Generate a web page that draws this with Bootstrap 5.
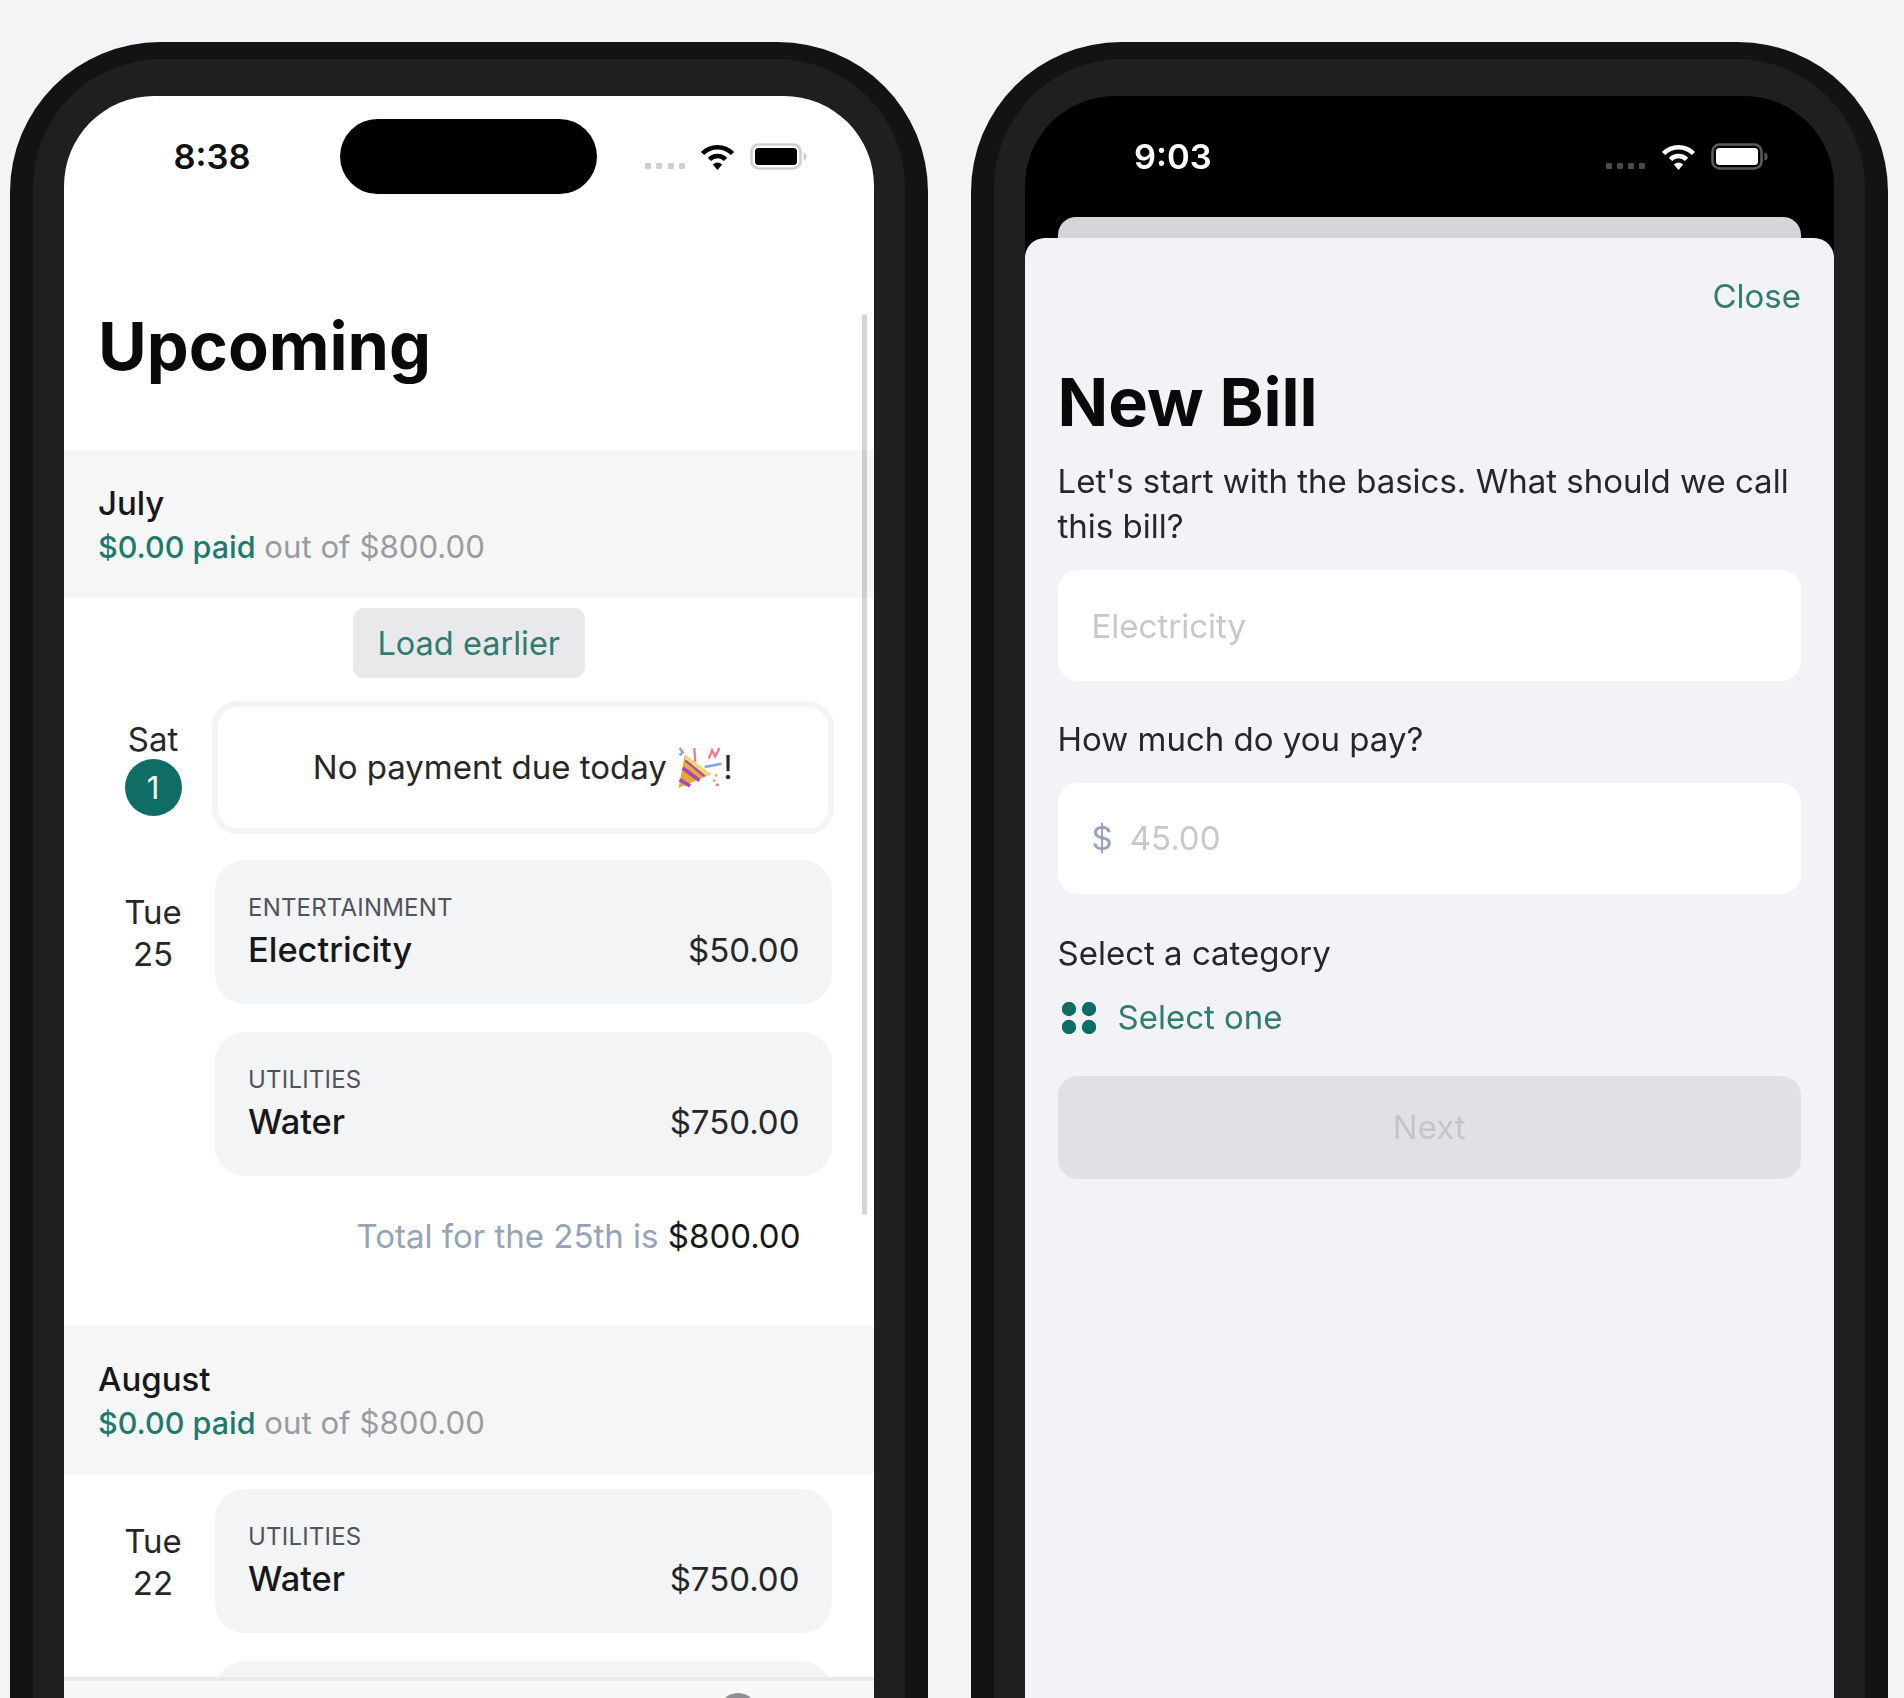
<!DOCTYPE html>
<html lang="en">
<head>
<meta charset="utf-8">
<title>Upcoming / New Bill</title>
<link href="https://cdn.jsdelivr.net/npm/bootstrap@5.3.0/dist/css/bootstrap.min.css" rel="stylesheet">
<style>
html,body{height:100%;overflow:hidden}
body{background:#f3f4f6;font-family:Inter,"Liberation Sans",sans-serif;color:#18181b}
.stage{height:1698px;overflow:hidden;padding:42px 0 0 10px;gap:43px;filter:blur(.7px)}
.ph-outer{width:917.5px;height:1900px;flex:none;background:#131313;border-radius:150px;padding:17px 23px}
.ph-bezel{height:100%;background:#1f1f1f;border-radius:128px;padding:37px 31px}
.ph-screen{height:100%;border-radius:90px;overflow:hidden;background:#fff;position:relative}
.ph-dark{background:#000}
.stat{height:75px;margin-top:23px}
.stat-time{font-weight:600;font-size:34.5px;line-height:1;width:166.5px;margin-left:109.5px;padding-top:1px;color:#111}
.ph-dark .stat-time{color:#fff}
.isl{width:257px;height:75px;background:#000;border-radius:38px}
.sig{width:40px;margin:18px 15px 0 48px}
.sig i{display:block;width:6px;height:6px;background:#cfcfcf;border-radius:1px}
.ph-dark .sig i{background:#4a4a4a}
.batt{margin-left:15px}
.feedbox{height:1227px;overflow:hidden}
.ttl{font-size:66.6px;line-height:80px;font-weight:700;color:#0a0a0a;margin:0}
.upc{height:256px;padding:112px 0 0 34px}
.mon{background:#f6f6f7;height:148px;padding:31px 0 0 34px;line-height:44px}
.mon-name{font-weight:500;color:#18181b;font-size:33px}
.mon-sum{color:#9b9b9f;font-size:31.2px}
.mon-sum b{color:#1e7a6c;font-weight:500;font-size:30.5px}
.more{width:232px;height:70px;margin-top:10px;background:#e9e9eb;border:0;border-radius:11px;color:#2e7d70;font-size:32.5px;padding:2px 0 0}
.dayrow{margin-right:42px}
.dcol{width:124px;margin-left:27px;flex:none;text-align:center;font-size:33px;line-height:42px;color:#27272a}
.dcol-a{padding-top:17px}
.dcol-b{padding-top:31px}
.cards{flex:1;min-width:0;gap:28px}
.pill{width:57px;height:57px;border-radius:50%;background:#0f6e63;color:#fff;margin:-1px auto 0;font-size:31px}
.empt{height:133px;margin:0 -2px 0 -3px;border:6px solid #f3f4f6;border-radius:26px;background:#fff;font-size:33px;color:#27272a}
.bill{height:144px;background:#f3f4f6;border-radius:30px;padding:33px 32px 0 33px}
.bill-cat{font-size:24px;line-height:30px;letter-spacing:.2px;color:#52525b}
.bill-row{margin-top:5px;line-height:44px}
.bill-name{font-weight:500;color:#18181b;font-size:34.4px}
.bill-amt{color:#27272a;font-size:33px}
.tot{font-size:33px;line-height:44px;text-align:right;padding-right:73px;margin:38px 0 68px;color:#94a3b8}
.tot span{color:#18181b}
.tabb{height:60px;background:#f8f8f8;border-top:4px solid #e9e9ea;padding:12px 0 0 654px}
.tab-ico{width:40px;height:40px;border-radius:50%;background:#8e8e93}
.sbar{position:absolute;right:7px;top:218px;width:5px;height:901px;background:rgba(0,0,0,.16);border-radius:3px}
.sh-back{height:21px;margin:23px 33px 0;background:#d5d5da;border-radius:18px 18px 0 0}
.sh{background:#f2f2f7;height:1500px;border-radius:20px 20px 0 0;padding:36px 33px 0}
.sh-close{display:block;text-align:right;color:#2e7d70;font-size:33px;line-height:44px;text-decoration:none}
.sh .ttl{margin-top:44px}
.lbl{font-size:33px;line-height:45px;color:#27272a;margin:17px 0 0}
.fld{height:111px;border:0;border-radius:20px;background:#fff;padding:0 34px;font-size:33px;box-shadow:none}
.fld::placeholder{color:#c7c7cc}
.fld-a{margin-top:21px}
.fld-b{margin-top:22px;height:111px;background:#fff;border-radius:20px;padding:1px 34px 0;font-size:33px}
.fld-b .cur{color:#94a3b8;margin-right:17px}
.fld-b .fld{padding:0;height:auto;background:transparent}
.lab2{font-size:33px;line-height:44px;color:#27272a}
.lab-a{margin-top:36px}
.lab-b{margin-top:37px}
.pick{margin-top:21px;height:44px;padding-left:4px;gap:22px;color:#2e7d70;font-size:33px}
.nxt,.nxt:disabled{margin-top:36px;height:103px;width:100%;background:#e0e0e5;border:0;border-radius:20px;color:#c4c4c9;font-size:33px;opacity:1}
.gap26{margin-top:26px}
.gap23{margin-top:23px}
.gap15{margin-top:15px}
</style>
</head>
<body>
<main class="stage d-flex align-items-start">

  <section class="ph-outer">
    <div class="ph-bezel">
      <div class="ph-screen">
        <div class="stat d-flex align-items-center">
          <div class="stat-time">8:38</div>
          <div class="isl"></div>
          <div class="sig d-flex justify-content-between"><i></i><i></i><i></i><i></i></div>
          <svg width="35" height="26" viewBox="0 0 35 26"><path d="M2.5 9.5A21 21 0 0 1 32.5 9.5M9.5 15.5A11 11 0 0 1 25.5 15.5" fill="none" stroke="#000" stroke-width="4.6"/><path d="M12.8 20.6Q17.5 16.6 22.2 20.6L17.5 26Z" fill="#000"/></svg>
          <svg class="batt" width="57" height="27" viewBox="0 0 57 27"><rect x="1.5" y="1.5" width="49" height="24" rx="7" fill="#fff" stroke="#cfcfcf" stroke-width="2.6"/><rect x="5" y="5" width="42" height="17" rx="3.5" fill="#000"/><path d="M53.5 9.5c2 .6 3 2 3 4s-1 3.4-3 4z" fill="#cfcfcf"/></svg>
        </div>
        <div class="upc"><h1 class="ttl">Upcoming</h1></div>
        <div class="feedbox">
          <div class="mon"><div class="mon-name">July</div><div class="mon-sum"><b>$0.00 paid</b> out of $800.00</div></div>
          <div class="text-center"><button class="btn more" type="button">Load earlier</button></div>

          <div class="dayrow d-flex gap23">
            <div class="dcol dcol-a"><div>Sat</div><div class="pill d-flex align-items-center justify-content-center">1</div></div>
            <div class="cards d-flex flex-column"><div class="empt d-flex align-items-center justify-content-center">No payment due today&nbsp;<svg width="47" height="44" viewBox="0 0 44 42"><path d="M2 40 8 8 33 27Z" fill="#e6ad2c"/><path d="M8 8 33 27 26 29 9 17Z" fill="#f7d866"/><path d="M6 21 22 33M3 32 13 38" stroke="#a845c9" stroke-width="3.6" fill="none"/><path d="M8.5 14 27 29" stroke="#a845c9" stroke-width="2.4" fill="none"/><path d="M3 2 6 6 3 9M27 20 43 17" stroke="#7aa5f5" stroke-width="2.4" fill="none"/><path d="M17 2l1 13M31 12l3-8 3 6 4-8" stroke="#f0788f" stroke-width="2.2" fill="none"/><circle cx="38" cy="28" r="1.5" fill="#eeb27a"/><circle cx="36" cy="33" r="1.5" fill="#eeb27a"/><circle cx="39" cy="37" r="1.5" fill="#f0788f"/></svg>!</div></div>
          </div>

          <div class="dayrow d-flex gap26">
            <div class="dcol dcol-b"><div>Tue</div><div>25</div></div>
            <div class="cards d-flex flex-column">
              <div class="bill"><div class="bill-cat">ENTERTAINMENT</div><div class="bill-row d-flex justify-content-between align-items-baseline"><span class="bill-name">Electricity</span><span class="bill-amt">$50.00</span></div></div>
              <div class="bill"><div class="bill-cat">UTILITIES</div><div class="bill-row d-flex justify-content-between align-items-baseline"><span class="bill-name">Water</span><span class="bill-amt">$750.00</span></div></div>
            </div>
          </div>
          <div class="tot">Total for the 25th is <span>$800.00</span></div>

          <div class="mon"><div class="mon-name">August</div><div class="mon-sum"><b>$0.00 paid</b> out of $800.00</div></div>
          <div class="dayrow d-flex gap15">
            <div class="dcol dcol-b"><div>Tue</div><div>22</div></div>
            <div class="cards d-flex flex-column">
              <div class="bill"><div class="bill-cat">UTILITIES</div><div class="bill-row d-flex justify-content-between align-items-baseline"><span class="bill-name">Water</span><span class="bill-amt">$750.00</span></div></div>
              <div class="bill"></div>
            </div>
          </div>
        </div>
        <div class="tabb"><div class="tab-ico"></div></div>
        <div class="sbar"></div>
      </div>
    </div>
  </section>

  <section class="ph-outer">
    <div class="ph-bezel">
      <div class="ph-screen ph-dark">
        <div class="stat d-flex align-items-center">
          <div class="stat-time">9:03</div>
          <div class="isl"></div>
          <div class="sig d-flex justify-content-between"><i></i><i></i><i></i><i></i></div>
          <svg width="35" height="26" viewBox="0 0 35 26"><path d="M2.5 9.5A21 21 0 0 1 32.5 9.5M9.5 15.5A11 11 0 0 1 25.5 15.5" fill="none" stroke="#fff" stroke-width="4.6"/><path d="M12.8 20.6Q17.5 16.6 22.2 20.6L17.5 26Z" fill="#fff"/></svg>
          <svg class="batt" width="57" height="27" viewBox="0 0 57 27"><rect x="1.5" y="1.5" width="49" height="24" rx="7" fill="#000" stroke="#5a5a5a" stroke-width="2.6"/><rect x="5" y="5" width="42" height="17" rx="3.5" fill="#fff"/><path d="M53.5 9.5c2 .6 3 2 3 4s-1 3.4-3 4z" fill="#5a5a5a"/></svg>
        </div>
        <div class="sh-back"></div>
        <div class="sh">
          <a class="sh-close" href="#">Close</a>
          <h1 class="ttl">New Bill</h1>
          <p class="lbl">Let's start with the basics. What should we call this bill?</p>
          <input class="form-control fld fld-a" type="text" placeholder="Electricity">
          <div class="lab2 lab-a">How much do you pay?</div>
          <div class="fld-b d-flex align-items-center"><span class="cur">$</span><input class="form-control fld" type="text" placeholder="45.00"></div>
          <div class="lab2 lab-b">Select a category</div>
          <div class="pick d-flex align-items-center">
            <svg width="34" height="32" viewBox="0 0 34 32" fill="#0f6e63"><circle cx="7" cy="7" r="7.2"/><circle cx="27" cy="7" r="7.2"/><circle cx="7" cy="25" r="7.2"/><circle cx="27" cy="25" r="7.2"/></svg>
            <span>Select one</span>
          </div>
          <button class="btn nxt" type="button" disabled>Next</button>
        </div>
      </div>
    </div>
  </section>

</main>
<script src="https://cdn.jsdelivr.net/npm/bootstrap@5.3.0/dist/js/bootstrap.bundle.min.js"></script>
</body>
</html>
